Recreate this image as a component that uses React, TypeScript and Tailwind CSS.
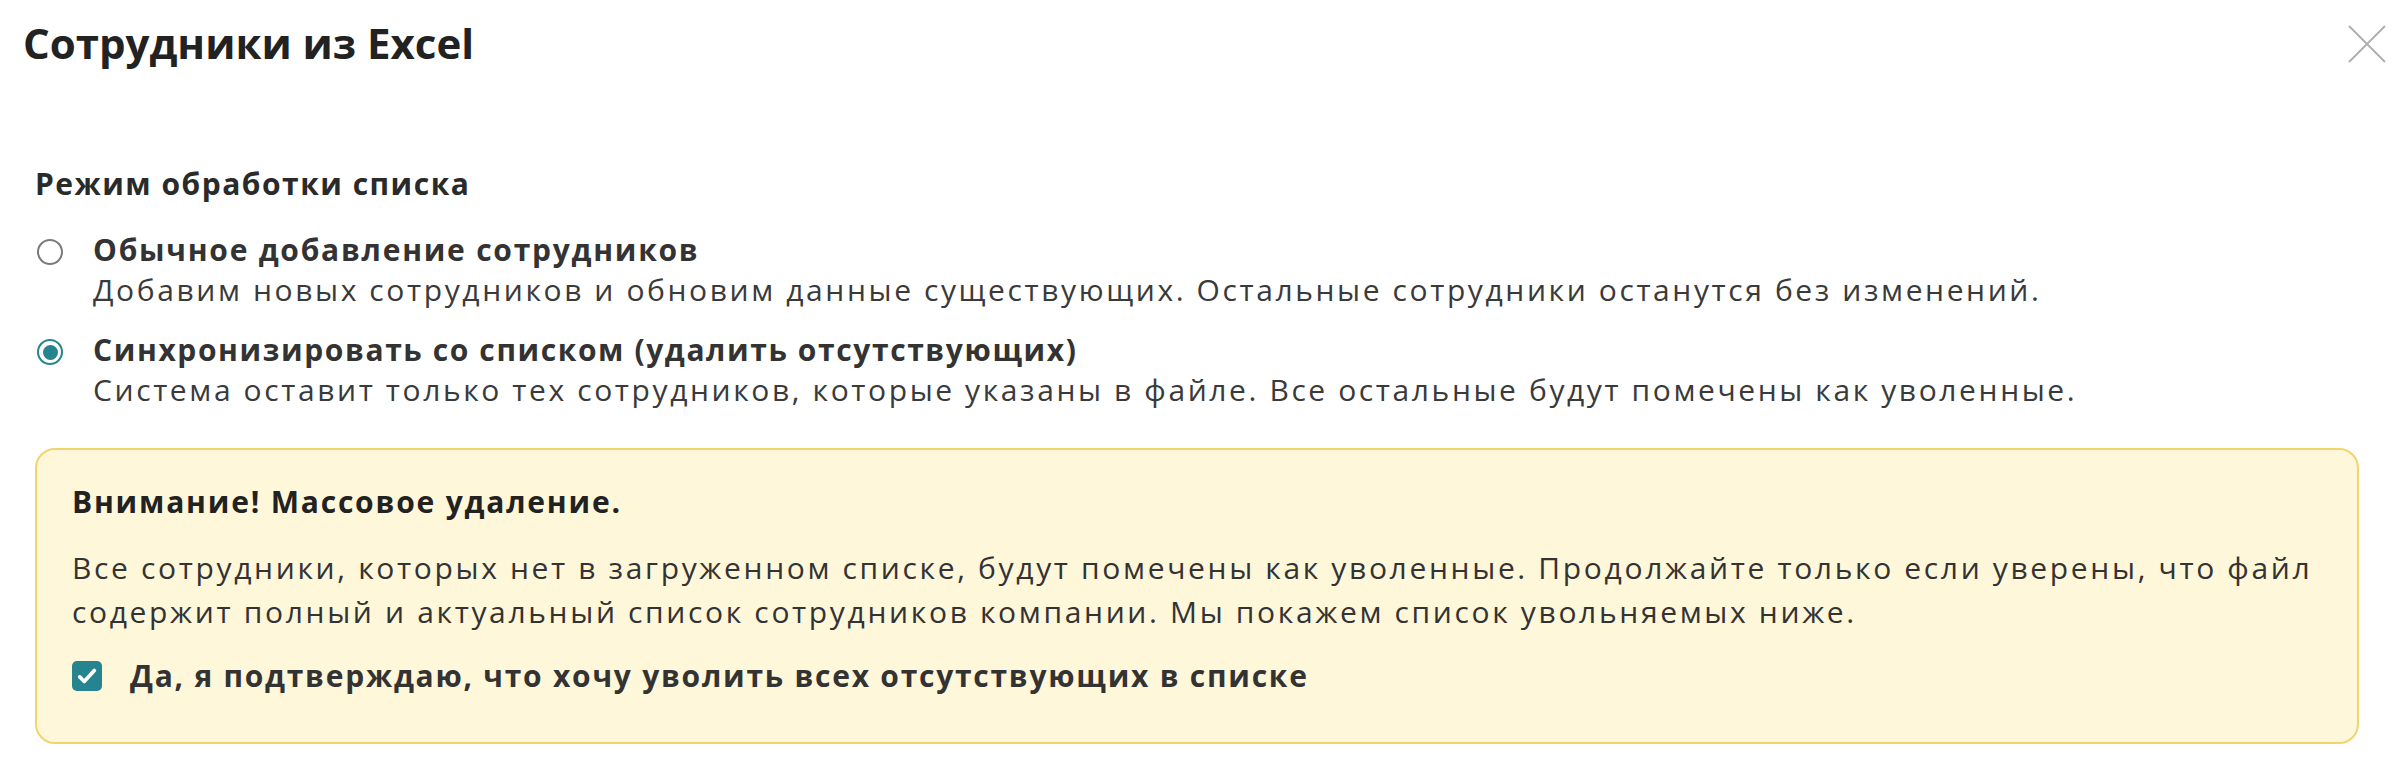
import React from "react";

const font = { fontFamily: '"Open Sans", "Noto Sans", sans-serif' };

function Radio({ checked }: { checked: boolean }) {
  return (
    <span
      className={
        "mt-[9px] flex h-[26px] w-[26px] shrink-0 items-center justify-center rounded-full border-2 " +
        (checked ? "border-[#25848f]" : "border-[#7a7a7a]")
      }
    >
      {checked && <span className="h-[15px] w-[15px] rounded-full bg-[#25848f]" />}
    </span>
  );
}

function Option({
  checked,
  title,
  text,
  titleClass,
}: {
  checked: boolean;
  title: string;
  text: string;
  titleClass: string;
}) {
  return (
    <div className="flex items-start gap-[30px] pl-[2px]">
      <Radio checked={checked} />
      <div className="flex flex-col">
        <div className={"text-[30px] font-bold leading-[40px] text-[#333333] " + titleClass}>{title}</div>
        <div className="text-[30px] leading-[40px] tracking-[2.6px] text-[#3a3a3a]">{text}</div>
      </div>
    </div>
  );
}

export default function App() {
  return (
    <div className="h-[768px] w-[2394px] overflow-hidden bg-white" style={font}>
      <div className="flex items-start justify-between pl-[23px] pr-[8px] pt-[20px]">
        <h1 className="text-[42px] font-bold leading-[46px] text-[#222222]">Сотрудники из Excel</h1>
        <button className="mt-[5px] h-[38px] w-[38px] text-[#b0b0b0]" aria-label="Закрыть">
          <svg viewBox="0 0 38 38" className="h-[38px] w-[38px]" fill="none" stroke="currentColor" strokeWidth="2">
            <path d="M1 1L37 37M37 1L1 37" />
          </svg>
        </button>
      </div>

      <div className="px-[35px] pt-[98px]">
        <div className="text-[30px] font-bold leading-[40px] tracking-[1.5px] text-[#2a2a2a]">Режим обработки списка</div>

        <div className="mt-[26px] flex flex-col gap-[20px]">
          <Option
            checked={false}
            titleClass="tracking-[1.75px]"
            title="Обычное добавление сотрудников"
            text="Добавим новых сотрудников и обновим данные существующих. Остальные сотрудники останутся без изменений."
          />
          <Option
            checked
            titleClass="tracking-[1.6px]"
            title="Синхронизировать со списком (удалить отсутствующих)"
            text="Система оставит только тех сотрудников, которые указаны в файле. Все остальные будут помечены как уволенные."
          />
        </div>

        <div className="mt-[38px] rounded-[20px] border-2 border-[#f2d46e] bg-[#fff7da] px-[35px] pb-[46px] pt-[32px]">
          <div className="text-[30px] font-bold leading-[40px] tracking-[1.8px] text-[#222222]">Внимание! Массовое удаление.</div>
          <p className="mt-[24px] text-[30px] leading-[44px] tracking-[2.65px] text-[#333333]">
            Все сотрудники, которых нет в загруженном списке, будут помечены как уволенные. Продолжайте только если уверены, что файл
            <br />
            содержит полный и актуальный список сотрудников компании. Мы покажем список увольняемых ниже.
          </p>
          <label className="mt-[22px] flex items-center gap-[28px]">
            <span className="flex h-[30px] w-[30px] items-center justify-center rounded-[5px] bg-[#25848f]">
              <svg viewBox="0 0 24 24" className="h-[22px] w-[22px]" fill="none" stroke="white" strokeWidth="4" strokeLinecap="round" strokeLinejoin="round">
                <path d="M4 13l5 5L20 6" />
              </svg>
            </span>
            <span className="text-[30px] font-bold leading-[40px] tracking-[1.75px] text-[#333333]">
              Да, я подтверждаю, что хочу уволить всех отсутствующих в списке
            </span>
          </label>
        </div>
      </div>
    </div>
  );
}
